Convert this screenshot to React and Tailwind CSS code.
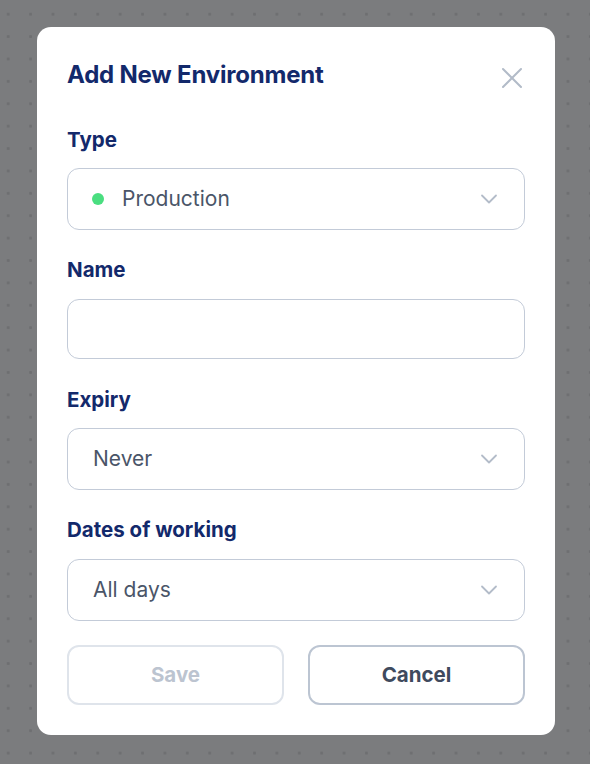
import { useState } from 'react';

const Chevron = () => (
  <svg width="18" height="10" viewBox="0 0 18 10" fill="none" className="shrink-0">
    <path d="M2 1.5l7 7 7-7" stroke="#b3bcc9" strokeWidth="1.8" strokeLinecap="round" strokeLinejoin="round" />
  </svg>
);

const Label = ({ children, className = '' }) => (
  <div className={`text-[20.5px] font-bold text-[#13296b] leading-[20px] ${className}`}>{children}</div>
);

const Select = ({ children, className = '' }) => (
  <div className={`h-[62px] rounded-[12px] border border-[#c3cbd8] flex items-center pl-[25px] pr-[26px] bg-white ${className}`}>
    <div className="flex-1 flex items-center text-[21px] text-[#4a5568]">{children}</div>
    <Chevron />
  </div>
);

export default function App() {
  const [name, setName] = useState('');

  return (
    <div
      className="min-h-[764px] w-full bg-[#7b7c7e] bg-[radial-gradient(circle,#6e6f71_1.3px,transparent_1.6px)] bg-[length:22.4px_22.4px] bg-[position:-3px_3px] pt-[27px] px-[37px] font-['Inter',sans-serif]"
    >
      <div className="w-[518px] bg-white rounded-[14px] px-[30px] pt-[30px] pb-[30px] flex flex-col">
        <div className="flex items-center justify-between h-[36px]">
          <h2 className="text-[24px] font-bold text-[#13296b] tracking-[-0.2px]">Add New Environment</h2>
          <button className="mr-[1px] mt-[6px]">
            <svg width="24" height="24" viewBox="0 0 24 24" fill="none">
              <path d="M3 3l18 18M21 3L3 21" stroke="#b2bbc8" strokeWidth="2" strokeLinecap="round" />
            </svg>
          </button>
        </div>

        <Label className="mt-[37px]">Type</Label>
        <Select className="mt-[18px]">
          <span className="w-[12px] h-[12px] rounded-full bg-[#4ade80] ml-[-1px] mr-[18px]" />
          Production
        </Select>

        <Label className="mt-[30px]">Name</Label>
        <input
          value={name}
          onChange={(e) => setName(e.target.value)}
          className="mt-[19px] h-[60px] rounded-[12px] border border-[#c3cbd8] px-[25px] text-[21px] text-[#4a5568] outline-none"
        />

        <Label className="mt-[31px]">Expiry</Label>
        <Select className="mt-[18px]">Never</Select>

        <Label className="mt-[30px]">Dates of working</Label>
        <Select className="mt-[19px]">All days</Select>

        <div className="mt-[24px] grid grid-cols-2 gap-[24px]">
          <button className="h-[60px] rounded-[12px] border-2 border-[#dfe4eb] text-[20.5px] font-bold text-[#bcc4d0]">
            Save
          </button>
          <button className="h-[60px] rounded-[12px] border-2 border-[#bcc5d2] text-[20.5px] font-bold text-[#3f4a5e]">
            Cancel
          </button>
        </div>
      </div>
    </div>
  );
}
